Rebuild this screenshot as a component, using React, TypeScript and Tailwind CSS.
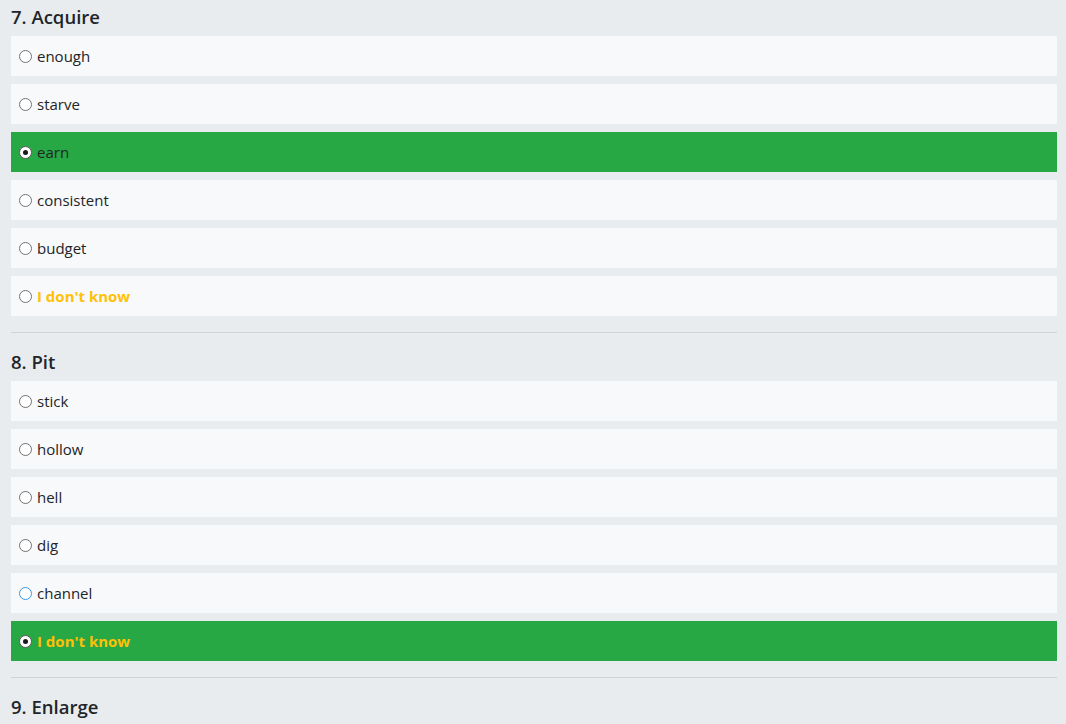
import React from "react";

type Option = { label: string; idk?: boolean; checked?: boolean; focus?: boolean };

const questions: { title: string; options: Option[] }[] = [
  {
    title: "7. Acquire",
    options: [
      { label: "enough" },
      { label: "starve" },
      { label: "earn", checked: true },
      { label: "consistent" },
      { label: "budget" },
      { label: "I don't know", idk: true },
    ],
  },
  {
    title: "8. Pit",
    options: [
      { label: "stick" },
      { label: "hollow" },
      { label: "hell" },
      { label: "dig" },
      { label: "channel", focus: true },
      { label: "I don't know", idk: true, checked: true },
    ],
  },
  {
    title: "9. Enlarge",
    options: [],
  },
];

const Radio = ({ checked, focus }: { checked?: boolean; focus?: boolean }) => {
  if (checked) {
    return (
      <span className="w-[13px] h-[13px] rounded-full bg-white border-[1.5px] border-[#5a5a5a] flex items-center justify-center shrink-0">
        <span className="w-[5px] h-[5px] rounded-full bg-[#1b1b1b]" />
      </span>
    );
  }
  return (
    <span
      className={
        focus
          ? "w-[13px] h-[13px] rounded-full bg-white border-[1.5px] border-[#3b99e0] shrink-0"
          : "w-[13px] h-[13px] rounded-full bg-white border-[1.5px] border-[#727272] shrink-0"
      }
    />
  );
};

const App = () => {
  return (
    <div
      className="min-h-screen bg-[#e9ecef] pl-[11px] pr-[9px] pt-[5px] overflow-hidden"
      style={{ fontFamily: '"Open Sans", "Noto Sans", sans-serif' }}
    >
      {questions.map((q, qi) => (
        <div key={qi}>
          {qi > 0 && <hr className="border-0 border-t border-[#d0d3d6] mt-4 mb-[17px]" />}
          <h3 className="text-[18.5px] leading-[24px] font-semibold text-[#212529] mb-[7px]">{q.title}</h3>
          <div className="flex flex-col gap-2">
            {q.options.map((o, i) => (
              <label
                key={i}
                className={
                  o.checked
                    ? "h-10 bg-[#28a745] flex items-center gap-[5px] pl-2 text-[15px]"
                    : "h-10 bg-[#f8f9fa] flex items-center gap-[5px] pl-2 text-[15px]"
                }
              >
                <Radio checked={o.checked} focus={o.focus} />
                <span className={o.idk ? "text-[#ffc107] font-bold" : "text-[#212529]"}>{o.label}</span>
              </label>
            ))}
          </div>
        </div>
      ))}
    </div>
  );
};

export default App;
